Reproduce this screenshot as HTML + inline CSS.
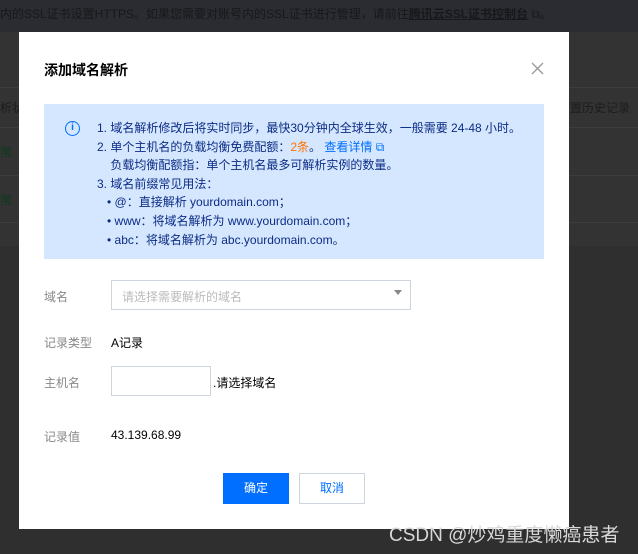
<!DOCTYPE html>
<html><head><meta charset="utf-8"><style>
*{margin:0;padding:0;box-sizing:border-box}
body{width:638px;height:554px;overflow:hidden;background:#2f2f2f;font-family:"Liberation Sans","Noto Sans CJK SC",sans-serif;font-size:12px;position:relative;color:#000}
.top{position:absolute;left:0;top:0;width:638px;height:32px;background:#2a2c31;color:#16181b;font-size:12px;padding:5px 0 0 0;white-space:nowrap}
.bg2{position:absolute;left:0;top:32px;width:638px;height:214px;background:#333}
.line{position:absolute;left:0;width:638px;height:1px;background:#3d3d3d}
.bgtxt{position:absolute;font-size:12px;color:#1c1c1c;white-space:nowrap}
.modal{position:absolute;left:19px;top:32px;width:550px;height:497px;background:#fff}
.title{position:absolute;left:25px;top:28px;font-size:14px;font-weight:bold;color:#000}
.close{position:absolute;left:511px;top:29px;width:15px;height:15px}
.info{position:absolute;left:25px;top:72px;width:500px;height:155px;background:#d5e7fe;color:#0c2c86;font-size:12px;line-height:18.6px}
.info .t{position:absolute;left:53px;top:15px;white-space:nowrap}
.icon{position:absolute;left:21px;top:17px;width:15px;height:15px;border:1.5px solid #006eff;border-radius:50%;color:#006eff;font-size:10px;font-weight:bold;text-align:center;line-height:12px}
.lbl{position:absolute;left:25px;color:#888;font-size:12px}
.val{position:absolute;left:92px;font-size:12px;color:#000}
.sel{position:absolute;left:92px;top:248px;width:300px;height:30px;border:1px solid #cfd5de;color:#bbb;padding:7px 10px}
.inp{position:absolute;left:92px;top:334px;width:100px;height:30px;border:1px solid #cfd5de}
.btn{position:absolute;top:441px;width:66px;height:31px;text-align:center;line-height:31px;font-size:12px}
</style></head><body>
<div class="top">内的SSL证书设置HTTPS。如果您需要对账号内的SSL证书进行管理，请前往<u style="font-weight:bold">腾讯云SSL证书控制台</u> ⧉。</div>
<div class="bg2"></div>
<div class="line" style="top:87px"></div>
<div class="line" style="top:127px"></div>
<div class="line" style="top:175px"></div>
<div class="line" style="top:222px"></div>
<div style="position:absolute;left:0;top:266px;width:638px;height:288px;background:#2f2f2f"></div>
<div class="bgtxt" style="left:0;top:99px">析状</div>
<div class="bgtxt" style="left:0;top:143px;color:#0b3a1c">常</div>
<div class="bgtxt" style="left:0;top:191px;color:#0b3a1c">常</div>
<div class="bgtxt" style="left:570px;top:99px">置历史记录（</div>
<div class="modal">
<div class="title">添加域名解析</div>
<svg class="close" viewBox="0 0 15 15"><path d="M2 2L13 13M13 2L2 13" stroke="#999" stroke-width="1.3"/></svg>
<div class="info"><div class="icon">i</div><div class="t">
1. 域名解析修改后将实时同步，最快30分钟内全球生效，一般需要 24-48 小时。<br>
2. 单个主机名的负载均衡免费配额：<span style="color:#ff7200">2条</span>。 <span style="color:#006eff">查看详情 ⧉</span><br>
&nbsp;&nbsp;&nbsp;&nbsp;负载均衡配额指：单个主机名最多可解析实例的数量。<br>
3. 域名前缀常见用法：<br>
&nbsp;&nbsp;&nbsp;• @：直接解析 yourdomain.com；<br>
&nbsp;&nbsp;&nbsp;• www：将域名解析为 www.yourdomain.com；<br>
&nbsp;&nbsp;&nbsp;• abc：将域名解析为 abc.yourdomain.com。</div></div>
<div class="lbl" style="top:256px">域名</div>
<div class="sel">请选择需要解析的域名<span style="position:absolute;right:8px;top:9px;border-left:4px solid transparent;border-right:4px solid transparent;border-top:5px solid #888"></span></div>
<div class="lbl" style="top:302px">记录类型</div><div class="val" style="top:302px">A记录</div>
<div class="lbl" style="top:342px">主机名</div>
<div class="inp"></div><div class="val" style="left:194px;top:342px">.请选择域名</div>
<div class="lbl" style="top:396px">记录值</div><div class="val" style="top:396px">43.139.68.99</div>
<div class="btn" style="left:204px;background:#006eff;color:#fff">确定</div>
<div class="btn" style="left:280px;border:1px solid #cfd5de;color:#006eff;line-height:29px">取消</div>
</div>
<div style="position:absolute;left:389px;top:520px;font-size:19px;color:#d8d8d8;white-space:nowrap">CSDN @炒鸡重度懒癌患者</div>
</body></html>
